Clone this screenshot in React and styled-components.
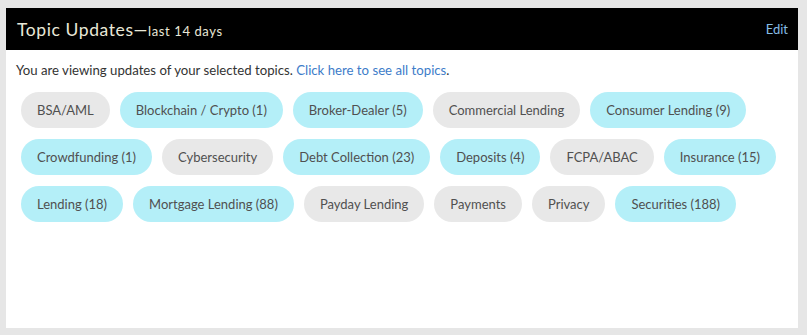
import React from "react";
import styled, { createGlobalStyle } from "styled-components";

const GlobalStyle = createGlobalStyle`
  body {
    margin: 0;
    background: #e6e6e6;
    font-family: "Lato", "Noto Sans", sans-serif;
  }
`;

const Page = styled.div`
  padding: 8px 9px 7px 6px;
`;

const Panel = styled.section`
  background: #fff;
  height: 320px;
`;

const Header = styled.header`
  display: flex;
  align-items: center;
  justify-content: space-between;
  height: 42px;
  padding: 0 10px 0 11px;
  background: #000;
`;

const Title = styled.h2`
  margin: 0;
  font-size: 17.5px;
  font-weight: 400;
  letter-spacing: 0.6px;
  color: #e9e8d8;
`;

const Period = styled.span`
  font-size: 13px;
  letter-spacing: 0.6px;
`;

const EditLink = styled.a`
  font-size: 13px;
  color: #86bde6;
  text-decoration: none;
`;

const Body = styled.div`
  padding: 10px 10px 0 10px;
`;

const Intro = styled.p`
  margin: 0 0 12px;
  font-size: 13.2px;
  line-height: 20px;
  color: #333;
`;

const Link = styled.a`
  color: #3d7cc9;
  text-decoration: none;
`;

const ChipList = styled.ul`
  display: flex;
  flex-wrap: wrap;
  gap: 11px 10px;
  margin: 0;
  padding: 0 5px;
  list-style: none;
`;

const Chip = styled.li`
  display: flex;
  align-items: center;
  height: 36px;
  padding: 0 16px;
  border-radius: 18px;
  font-size: 13px;
  color: #505050;
  background: ${(props) => (props.$active ? "#b4eff8" : "#e8e8e8")};
`;

const topics = [
  ["BSA/AML", 0],
  ["Blockchain / Crypto", 1],
  ["Broker-Dealer", 5],
  ["Commercial Lending", 0],
  ["Consumer Lending", 9],
  ["Crowdfunding", 1],
  ["Cybersecurity", 0],
  ["Debt Collection", 23],
  ["Deposits", 4],
  ["FCPA/ABAC", 0],
  ["Insurance", 15],
  ["Lending", 18],
  ["Mortgage Lending", 88],
  ["Payday Lending", 0],
  ["Payments", 0],
  ["Privacy", 0],
  ["Securities", 188],
];

export default function App() {
  return (
    <Page>
      <GlobalStyle />
      <Panel>
        <Header>
          <Title>
            Topic Updates—<Period>last 14 days</Period>
          </Title>
          <EditLink href="#">Edit</EditLink>
        </Header>
        <Body>
          <Intro>
            You are viewing updates of your selected topics.{" "}
            <Link href="#">Click here to see all topics</Link>.
          </Intro>
          <ChipList>
            {topics.map(([name, count]) => (
              <Chip key={name} $active={count > 0}>
                {count > 0 ? `${name} (${count})` : name}
              </Chip>
            ))}
          </ChipList>
        </Body>
      </Panel>
    </Page>
  );
}
